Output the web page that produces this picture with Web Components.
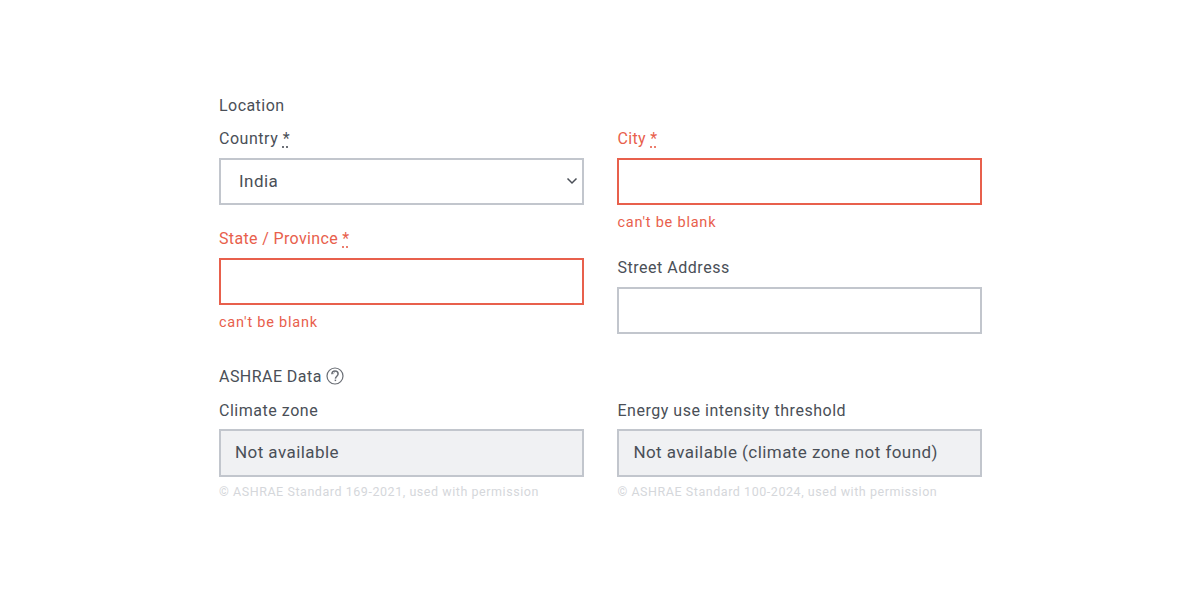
<!DOCTYPE html>
<html lang="en">
<head>
<meta charset="utf-8">
<title>Location</title>
<style>
  html, body { margin: 0; padding: 0; background: #fff; }
  body { font-family: "Roboto", "Liberation Sans", sans-serif; }
</style>
</head>
<body>
<template id="form-page-tpl">
  <style>
    :host { display: block; width: 763px; margin: 0 auto; padding: 94px 0 0 1px; box-sizing: content-box; }
  </style>
  <slot></slot>
</template>

<template id="form-section-tpl">
  <style>
    :host { display: block; margin-bottom: 8px; color: #4a4f57; }
    header { display: flex; align-items: center; gap: 4px; height: 22px; margin-bottom: 12px; font-size: 16px; letter-spacing: .45px; }
    .grid { display: grid; grid-template-columns: 365px 365px; column-gap: 33.4px; align-items: start; }
    .col { display: flex; flex-direction: column; }
  </style>
  <header><span class="title"></span><slot name="hint"></slot></header>
  <div class="grid">
    <div class="col"><slot name="left"></slot></div>
    <div class="col"><slot name="right"></slot></div>
  </div>
</template>

<template id="form-field-tpl">
  <style>
    :host { display: block; margin-bottom: 23px; color: #4a4f57; }
    :host([error]) { color: #e8604c; }
    :host([error]) .box { border-color: #e8604c; }
    :host([note]) { margin-bottom: 0; }
    label { display: block; height: 21px; line-height: 21px; margin-bottom: 9px; font-size: 16px; letter-spacing: .53px; }
    :host([readonly]) label { height: 22px; line-height: 23px; margin-bottom: 8px; }
    :host([error]) label { letter-spacing: .35px; }
    abbr { text-decoration: underline dotted; text-underline-offset: 3px; }
    .box { box-sizing: border-box; height: 47px; border: 2px solid #c2c6cd; background: #fff; display: flex; align-items: center; justify-content: space-between; padding: 0 18px 2px; font-size: 17px; letter-spacing: .44px; color: #4a4f57; }
    :host([readonly]) .box { background: #f0f1f3; padding: 0 14px 2px; height: 48px; }
    svg { margin-right: -14px; }
    .msg { height: 22px; line-height: 22px; margin-top: 7px; font-size: 14.5px; letter-spacing: .78px; }
    .note { height: 20px; line-height: 20px; margin-top: 5px; font-size: 12.5px; letter-spacing: .55px; color: #d5d7db; }
    [hidden] { display: none; }
  </style>
  <label></label>
  <div class="box"><span><slot></slot></span></div>
  <div class="msg" hidden></div>
  <div class="note" hidden></div>
</template>

<form-page>
  <form-section title-text="Location">
    <form-field slot="left" label="Country" required chevron>India</form-field>
    <form-field slot="left" label="State / Province" required error="can't be blank"></form-field>
    <form-field slot="right" label="City" required error="can't be blank"></form-field>
    <form-field slot="right" label="Street Address"></form-field>
  </form-section>
  <form-section title-text="ASHRAE Data">
    <help-icon slot="hint"></help-icon>
    <form-field slot="left" label="Climate zone" readonly note="© ASHRAE Standard 169-2021, used with permission">Not available</form-field>
    <form-field slot="right" label="Energy use intensity threshold" readonly note="© ASHRAE Standard 100-2024, used with permission">Not available (climate zone not found)</form-field>
  </form-section>
</form-page>

<script>
  function stamp(host, id) {
    host.attachShadow({mode: 'open'});
    host.shadowRoot.appendChild(document.getElementById(id).content.cloneNode(true));
  }

  class FormPage extends HTMLElement {
    constructor() {
      super();
      stamp(this, 'form-page-tpl');
    }
  }

  class FormSection extends HTMLElement {
    constructor() {
      super();
      stamp(this, 'form-section-tpl');
    }
    connectedCallback() {
      this.shadowRoot.querySelector('.title').textContent = this.getAttribute('title-text');
    }
  }

  class FormField extends HTMLElement {
    constructor() {
      super();
      stamp(this, 'form-field-tpl');
    }
    connectedCallback() {
      const root = this.shadowRoot;
      const label = root.querySelector('label');
      label.textContent = this.getAttribute('label');
      if (this.hasAttribute('required')) {
        const star = document.createElement('abbr');
        star.textContent = '*';
        label.append(' ', star);
      }
      if (this.hasAttribute('error')) {
        const msg = root.querySelector('.msg');
        msg.textContent = this.getAttribute('error');
        msg.hidden = false;
      }
      if (this.hasAttribute('note')) {
        const note = root.querySelector('.note');
        note.textContent = this.getAttribute('note');
        note.hidden = false;
      }
      if (this.hasAttribute('chevron')) {
        root.querySelector('.box').insertAdjacentHTML('beforeend',
          '<svg width="12" height="8" viewBox="0 0 12 8"><path d="M1.5 1.5l4.5 4.5 4.5-4.5" fill="none" stroke="#4a4f57" stroke-width="1.5"/></svg>');
      }
    }
  }

  class HelpIcon extends HTMLElement {
    constructor() {
      super();
      this.attachShadow({mode: 'open'});
      this.shadowRoot.innerHTML = `
        <style>
          :host { display: inline-flex; }
        </style>
        <svg width="18" height="18" viewBox="0 0 18 18" fill="none" stroke="#6a6e75">
          <circle cx="9" cy="9" r="8" stroke-width="1.2"/>
          <path d="M5.9 7.2C5.9 5.2 7.3 4 9 4s3.1 1.2 3.1 3c0 2-2.5 2.4-2.7 4.6" stroke-width="1.5"/>
          <path d="M7.4 7.2C7.4 6.2 8.1 5.5 9 5.5" stroke-width=".5"/>
          <path d="M9.4 12.6v1.5" stroke-width="1.5"/>
        </svg>`;
    }
  }

  customElements.define('form-page', FormPage);
  customElements.define('form-section', FormSection);
  customElements.define('form-field', FormField);
  customElements.define('help-icon', HelpIcon);
</script>
</body>
</html>
